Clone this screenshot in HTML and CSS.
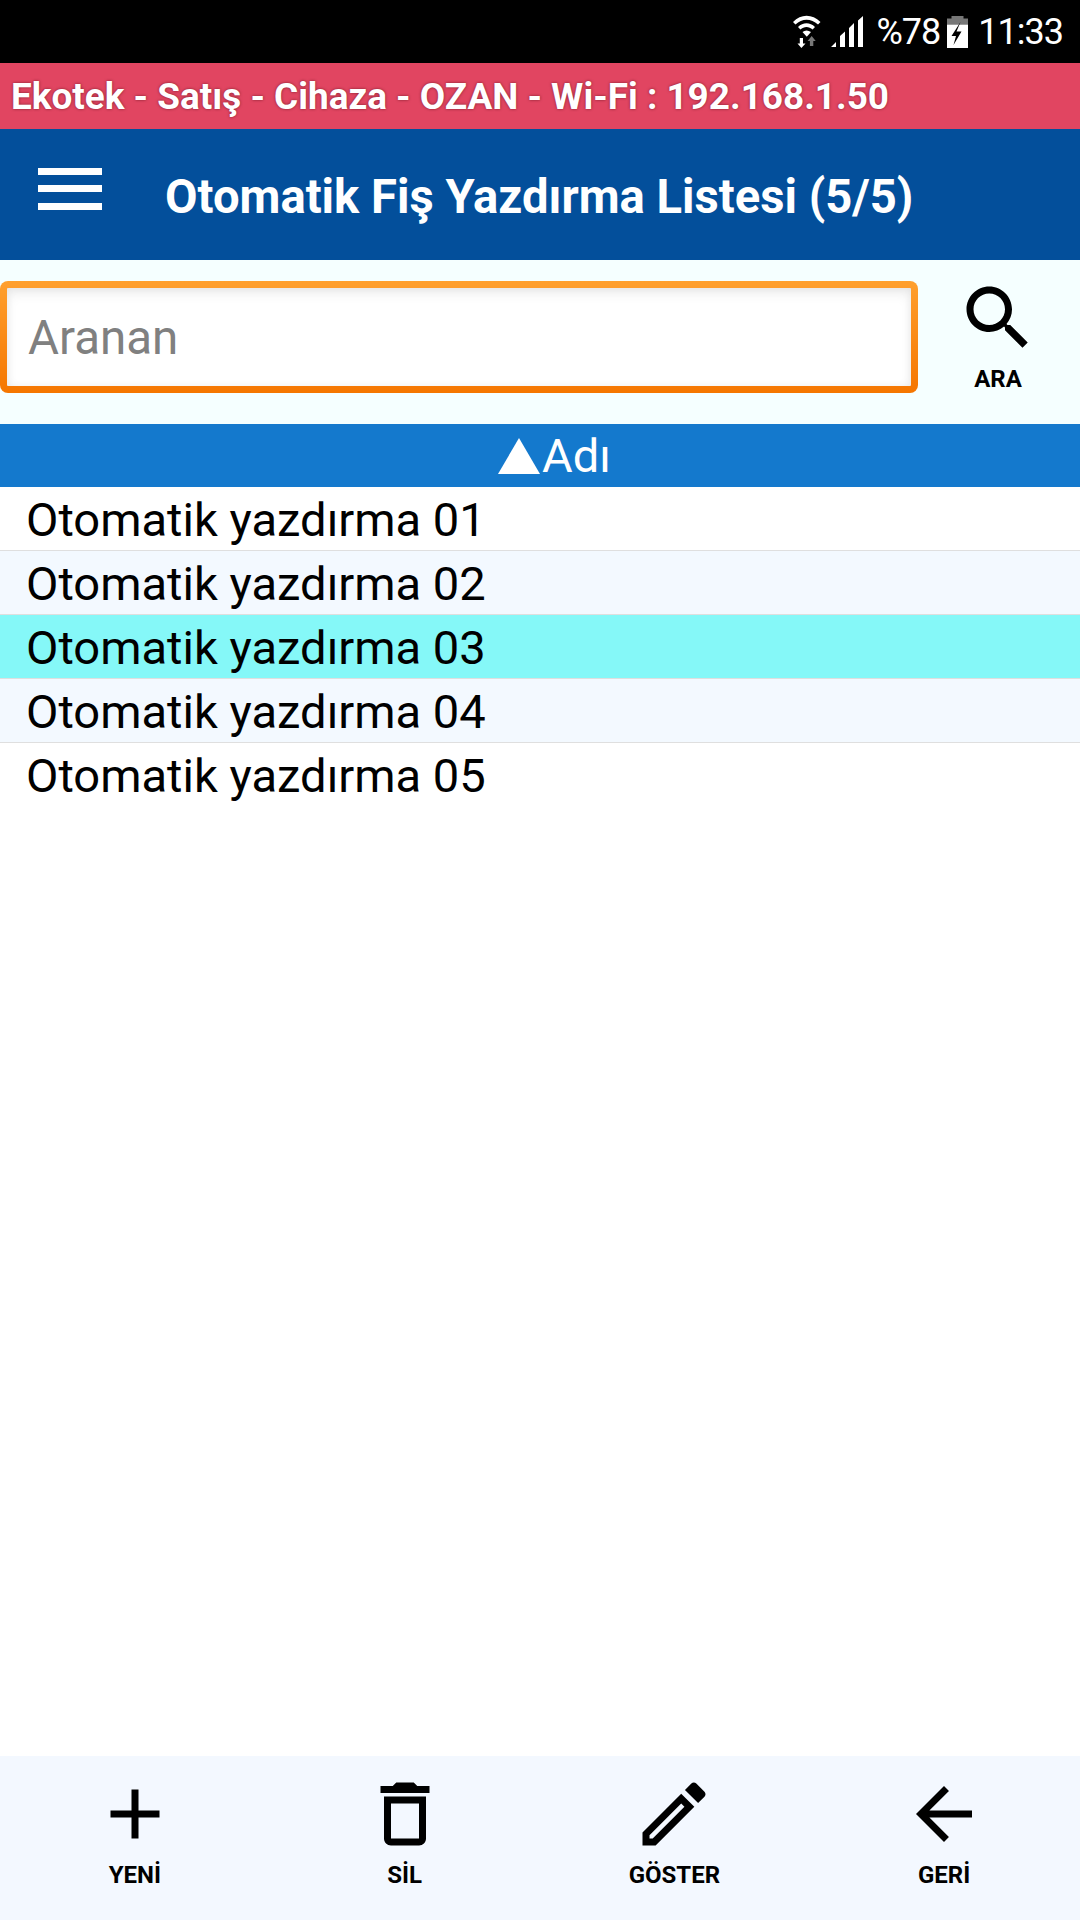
FILE: index.html
```html
<!DOCTYPE html>
<html lang="tr">
<head>
<meta charset="utf-8">
<title>Otomatik Fiş Yazdırma Listesi</title>
<link rel="stylesheet" href="styles.css">
</head>
<body>
<div class="app">
  <div class="status">
    <svg class="st-wifi" viewBox="0 0 28 33" width="28" height="33">
      <path d="M0 7C8-1.500 19-1.500 27.500 7L25 9.500C18 3 9 3 2.500 9.500z" fill="#fff"/>
      <path d="M5 12C10 7 17 7 22 12l-2.400 2.500C16 11 11 11 7.400 14.500z" fill="#fff"/>
      <path d="M9.500 17C12 15 15 15 18 17l-4.200 4.700z" fill="#fff"/>
      <path d="M6.800 23H10v5.500h2.500L8.400 33 4.500 28.500h2.300z" fill="#fff"/>
      <path d="M18.700 21l4 5h-2.400v5h-3.400v-5h-2.300z" fill="#777"/>
    </svg>
    <svg class="st-signal" viewBox="0 0 32 32" width="32" height="32">
      <path d="M0 31l5-5v5z M9 31V20l5-4.500V31z M18 31V12l5-5v24z M27 31V4.500L32 0v31z" fill="#fff"/>
    </svg>
    <span class="st-pct">%78</span>
    <svg class="st-batt" viewBox="0 0 21 32" width="21" height="32">
      <path d="M4.500 0h12v2.500H21v6H0v-6h4.500z" fill="#777"/>
      <path d="M0 8.500h21V32H0z" fill="#fff"/>
      <path d="M13.500 6L4.500 20h4.500l-2.500 9 8-13.500h-5l4-9.500z" fill="#000"/>
    </svg>
    <span class="st-time">11:33</span>
  </div>
  <div class="banner">Ekotek - Satış - Cihaza - OZAN - Wi-Fi : 192.168.1.50</div>
  <header class="appbar">
    <div class="burger"><i></i><i></i><i></i></div>
    <h1 class="title">Otomatik Fiş Yazdırma Listesi (5/5)</h1>
  </header>
  <section class="search">
    <input class="search-input" type="text" placeholder="Aranan">
    <div class="action action-search">
      <svg class="icon" viewBox="0 0 24 24"><path d="M15.500 14h-.79l-.28-.27C15.410 12.590 16 11.110 16 9.500 16 5.910 13.090 3 9.500 3S3 5.910 3 9.500 5.910 16 9.500 16c1.610 0 3.090-.59 4.230-1.570l.27.28v.79l5 4.990L20.490 19l-4.990-5zm-6 0C7.010 14 5 11.990 5 9.500S7.010 5 9.500 5 14 7.010 14 9.500 11.990 14 9.500 14z"/></svg>
      <span class="label">ARA</span>
    </div>
  </section>
  <div class="col-head"><svg class="tri" viewBox="0 0 42 36" width="42" height="36"><path d="M21 0l21 36H0z" fill="#fff"/></svg><span>Adı</span></div>
  <ul class="list">
    <li class="row">Otomatik yazdırma 01</li>
    <li class="row alt">Otomatik yazdırma 02</li>
    <li class="row sel">Otomatik yazdırma 03</li>
    <li class="row alt">Otomatik yazdırma 04</li>
    <li class="row last">Otomatik yazdırma 05</li>
  </ul>
  <footer class="toolbar">
    <div class="action">
      <svg class="icon" viewBox="0 0 24 24"><path d="M19 13h-6v6h-2v-6H5v-2h6V5h2v6h6v2z"/></svg>
      <span class="label">YENİ</span>
    </div>
    <div class="action">
      <svg class="icon" viewBox="0 0 24 24"><path d="M6 19c0 1.100.9 2 2 2h8c1.100 0 2-.9 2-2V7H6v12zM8 9h8v10H8V9zm7.500-5l-1-1h-5l-1 1H5v2h14V4z"/></svg>
      <span class="label">SİL</span>
    </div>
    <div class="action">
      <svg class="icon" viewBox="0 0 24 24"><path d="M3 17.250V21h3.750L17.810 9.940l-3.750-3.750L3 17.250zM5.920 19H5v-.92l9.060-9.060.92.92L5.920 19zM20.710 5.630l-2.340-2.340c-.2-.2-.45-.29-.71-.29s-.51.1-.7.29l-1.830 1.830 3.750 3.750 1.830-1.830c.39-.39.39-1.020 0-1.410z"/></svg>
      <span class="label">GÖSTER</span>
    </div>
    <div class="action">
      <svg class="icon" viewBox="0 0 24 24"><path d="M20 11H7.830l5.590-5.590L12 4l-8 8 8 8 1.410-1.410L7.830 13H20v-2z"/></svg>
      <span class="label">GERİ</span>
    </div>
  </footer>
</div>
</body>
</html>
```

FILE: styles.css
```css
* { box-sizing: border-box; }
html, body { margin: 0; padding: 0; }
body { font-family: Roboto, "Liberation Sans", sans-serif; color: #000; background: #fff; }
.app { width: 1080px; height: 1920px; display: flex; flex-direction: column; overflow: hidden; }

.status { height: 63px; background: #000; color: #fff; display: flex; align-items: center; justify-content: flex-end; padding-right: 17px; flex: none; }
.st-wifi { margin-right: 10px; }
.st-signal { margin-right: 14px; }
.st-pct { font-size: 36px; letter-spacing: -1px; margin-right: 7px; }
.st-batt { margin-right: 10px; }
.st-time { font-size: 36px; letter-spacing: -1px; }

.banner { height: 66px; background: #e14561; color: #fff; font-size: 36.900px; font-weight: 700; line-height: 68px; padding-left: 11px; text-shadow: 0 0 3px rgba(60,0,10,.6); flex: none; }

.appbar { height: 131px; background: #034f9b; display: flex; align-items: center; padding-left: 38px; flex: none; }
.burger { width: 64px; display: flex; flex-direction: column; gap: 10.500px; margin-right: 63px; margin-top: -12px; }
.burger i { display: block; height: 7px; background: #fff; }
.title { margin: 4px 0 0; color: #fff; font-size: 47.200px; font-weight: 700; }

.search { height: 164px; background: #f5ffff; display: flex; align-items: flex-start; flex: none; }
.search-input { width: 918px; height: 112px; margin-top: 21px; border: 7px solid transparent; border-radius: 8px; background: linear-gradient(#fff, #fff) padding-box, linear-gradient(#ffa02e, #f57600) border-box; box-shadow: inset 0 6px 12px rgba(0,0,0,.07), inset 0 0 8px rgba(0,0,0,.06); padding: 2px 0 0 21px; font-family: Roboto, "Liberation Sans", sans-serif; font-size: 47.500px; color: #000; outline: none; }
.search-input::placeholder { color: #808080; opacity: 1; }

.action { display: flex; flex-direction: column; align-items: center; }
.action-search { width: 160px; padding-top: 16px; }
.icon { width: 84px; height: 84px; display: block; fill: #000; }
.label { font-size: 24px; font-weight: 700; line-height: 26px; margin-top: 6px; white-space: nowrap; }

.col-head { height: 63px; background: #1479cd; color: #fff; display: flex; align-items: center; justify-content: center; font-size: 47px; padding-left: 29px; flex: none; }
.tri { margin-right: 2px; }

.list { list-style: none; margin: 0; padding: 0; flex: 1; }
.row { height: 64px; padding: 2px 0 0 26px; line-height: 62px; font-size: 47.100px; border-bottom: 1px solid #dfdfdf; }
.alt { background: #f3f9ff; }
.sel { background: #85f8f8; }
.last { border-bottom: 0; }

.toolbar { height: 164px; background: #f3f8ff; display: grid; grid-template-columns: repeat(4, 1fr); padding: 16px 1px 0 0; flex: none; }
```
